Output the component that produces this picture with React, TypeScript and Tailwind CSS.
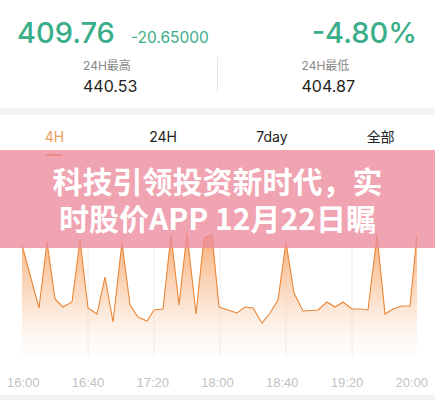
const NUM = { fontFamily: 'Inter, "Noto Sans CJK SC", sans-serif' };
const CJK = { fontFamily: 'Inter, "Noto Sans CJK SC", sans-serif' };

const points: [number, number][] = [
  [22, 245], [39, 308], [47, 242], [55, 299], [63, 307], [72, 302], [80, 240],
  [88, 308], [97, 314], [105, 277], [113, 322], [122, 242], [130, 305], [138, 317],
  [147, 321], [154, 310], [163, 309], [171, 235], [179, 305], [187, 233], [196, 314],
  [204, 238], [212, 235], [219, 307], [228, 310], [237, 313], [245, 307], [253, 308],
  [262, 323], [270, 313], [278, 300], [286, 242], [294, 293], [303, 311], [318, 310],
  [327, 302], [335, 307], [343, 302], [352, 309], [360, 309], [368, 310], [377, 235],
  [385, 314], [393, 309], [402, 306], [410, 306], [417, 235],
];

const tabs = ['4H', '24H', '7day', '全部'];
const times = ['16:00', '16:40', '17:20', '18:00', '18:40', '19:20', '20:00'];
const gridX = [88, 154, 220, 286, 352];

function Chart() {
  const line = points.map((p, i) => `${i ? 'L' : 'M'}${p[0]} ${p[1]}`).join(' ');
  const area = `${line} L417 357 L22 357 Z`;
  return (
    <svg width="435" height="200" viewBox="0 160 435 200" className="block">
      <defs>
        <linearGradient id="fill" x1="0" y1="235" x2="0" y2="357" gradientUnits="userSpaceOnUse">
          <stop offset="0" stopColor="#f59a55" stopOpacity="0.8" />
          <stop offset="0.5" stopColor="#f9c197" stopOpacity="0.55" />
          <stop offset="1" stopColor="#fde3cf" stopOpacity="0.05" />
        </linearGradient>
      </defs>
      {gridX.map((x) => (
        <line key={x} x1={x} y1="160" x2={x} y2="357" stroke="#eeeeee" strokeWidth="1" />
      ))}
      <path d={area} fill="url(#fill)" />
      <path d={line} fill="none" stroke="#ea8535" strokeWidth="1.1" strokeLinejoin="miter" />
    </svg>
  );
}

export default function App() {
  return (
    <div className="relative w-[435px] overflow-hidden bg-white">
      <div className="flex items-baseline justify-between pl-[17px] pr-[18px] pt-[18px] text-[#3aad89]" style={NUM}>
        <div className="flex items-baseline gap-[16px]">
          <span className="text-[29px] font-medium leading-none">409.76</span>
          <span className="text-[15.5px] leading-none">-20.65000</span>
        </div>
        <span className="text-[29px] font-medium leading-none">-4.80%</span>
      </div>

      <div className="mt-[13px] flex items-start">
        <div className="flex-1 pl-[83px]">
          <div className="text-[12px] leading-none text-[#888888]" style={CJK}>24H最高</div>
          <div className="mt-[6px] text-[16px] leading-none text-[#222222]" style={NUM}>440.53</div>
        </div>
        <div className="mt-[-3px] h-[35px] w-px bg-[#e6e6e6]" />
        <div className="flex-1 pl-[84px]">
          <div className="text-[12px] leading-none text-[#888888]" style={CJK}>24H最低</div>
          <div className="mt-[6px] text-[16px] leading-none text-[#222222]" style={NUM}>404.87</div>
        </div>
      </div>

      <div className="mt-[14px] h-[7px] bg-[#f2f2f2]" />

      <div className="grid grid-cols-4 pt-[15px] pb-[4px]">
        {tabs.map((t, i) => (
          <div key={t} className="flex flex-col items-center">
            <span
              className={`text-[14px] leading-none ${i === 0 ? 'text-[#eea05c]' : 'text-[#222222]'}`}
              style={CJK}
            >
              {t}
            </span>
            <span className={`mt-[10px] h-[2px] w-[16px] ${i === 0 ? 'bg-[#e98a3e]' : 'bg-transparent'}`} />
          </div>
        ))}
      </div>

      <Chart />

      <div
        className="mt-[16px] flex justify-between px-[7px] text-[13px] leading-none text-[#c2c2c2]"
        style={{ fontFamily: '"Liberation Sans", Arial, sans-serif' }}
      >
        {times.map((t) => (
          <span key={t}>{t}</span>
        ))}
      </div>

      <div className="mt-[6px] h-[10px] bg-[#f2f2f2]" />

      <div
        className="absolute left-0 right-0 top-[150px] flex h-[98px] flex-col items-center justify-center bg-[#ec8c9c]/80 text-[30px] font-bold leading-[37px] text-white"
        style={{ fontFamily: '"Noto Sans CJK SC", sans-serif' }}
      >
        <div>科技引领投资新时代，实</div>
        <div>时股价APP 12月22日瞩</div>
      </div>
    </div>
  );
}
